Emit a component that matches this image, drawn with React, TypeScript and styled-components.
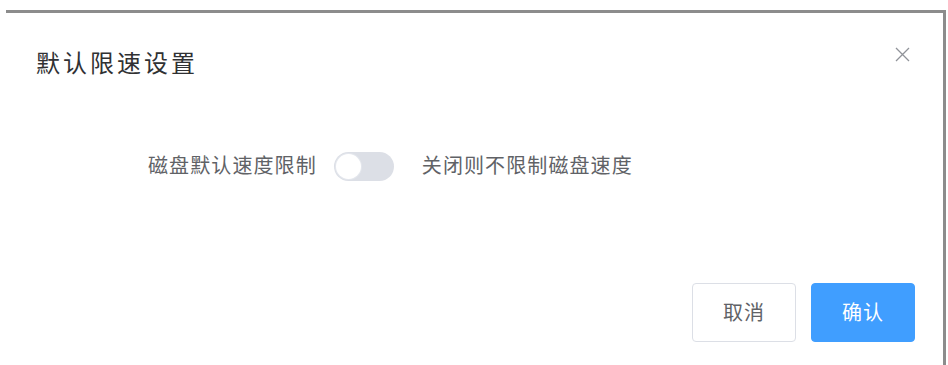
import React from "react";
import styled, { createGlobalStyle } from "styled-components";

const GlobalStyle = createGlobalStyle`
  html, body {
    margin: 0;
    padding: 0;
    background: #ffffff;
    font-family: "Noto Sans CJK SC", "Noto Sans", sans-serif;
  }
`;

export default function App() {
  return (
    <>
      <GlobalStyle />
      <Page>
        <Dialog>
          <Header>
            <Title>默认限速设置</Title>
            <Close aria-label="close">
              <svg width="15" height="15" viewBox="0 0 15 15">
                <path d="M1 1L14 14M14 1L1 14" stroke="#909399" strokeWidth="1.3" fill="none" />
              </svg>
            </Close>
          </Header>
          <Body>
            <FormRow>
              <Label>磁盘默认速度限制</Label>
              <Switch role="switch" aria-checked="false">
                <Knob />
              </Switch>
              <Hint>关闭则不限制磁盘速度</Hint>
            </FormRow>
          </Body>
          <Footer>
            <Button>取消</Button>
            <Button primary>确认</Button>
          </Footer>
        </Dialog>
      </Page>
    </>
  );
}

const Page = styled.div`
  width: 948px;
  height: 365px;
  padding: 10px 2px 0 6px;
  box-sizing: border-box;
  overflow: hidden;
`;

const Dialog = styled.div`
  height: 100%;
  border-top: 3px solid #8c8c8c;
  border-right: 3px solid #8c8c8c;
  background: #ffffff;
  display: flex;
  flex-direction: column;
`;

const Header = styled.div`
  display: flex;
  justify-content: space-between;
  align-items: flex-start;
  padding: 36px 33px 0 30px;
`;

const Title = styled.div`
  font-size: 24px;
  line-height: 26px;
  letter-spacing: 3px;
  color: #303133;
`;

const Close = styled.div`
  margin-top: -2px;
  width: 15px;
  height: 15px;
  display: flex;
`;

const Body = styled.div`
  padding: 76px 0 0 142px;
`;

const FormRow = styled.div`
  display: flex;
  align-items: center;
  height: 30px;
`;

const Label = styled.span`
  font-size: 20px;
  letter-spacing: 1.1px;
  color: #606266;
  margin-right: 17px;
  margin-top: -3px;
`;

const Switch = styled.div`
  width: 60px;
  height: 29px;
  border-radius: 15px;
  background: #dcdfe6;
  padding: 2px;
  box-sizing: border-box;
  display: flex;
  align-items: center;
`;

const Knob = styled.div`
  width: 25px;
  height: 25px;
  border-radius: 50%;
  background: #ffffff;
  box-shadow: 0 0 0 1px #e4e7ed;
`;

const Hint = styled.span`
  font-size: 20px;
  letter-spacing: 1.1px;
  color: #606266;
  margin-left: 28px;
  margin-top: -3px;
`;

const Footer = styled.div`
  display: flex;
  justify-content: flex-end;
  gap: 15px;
  padding: 102px 28px 0 0;
`;

const Button = styled.button<{ primary?: boolean }>`
  width: 104px;
  height: 59px;
  box-sizing: border-box;
  border-radius: 4px;
  border: 1px solid ${(p) => (p.primary ? "#409eff" : "#dcdfe6")};
  background: ${(p) => (p.primary ? "#409eff" : "#ffffff")};
  color: ${(p) => (p.primary ? "#ffffff" : "#606266")};
  font-family: "Noto Sans CJK SC", "Noto Sans", sans-serif;
  font-size: 20px;
  letter-spacing: 1px;
  padding: 0 0 3px;
  cursor: pointer;
`;
